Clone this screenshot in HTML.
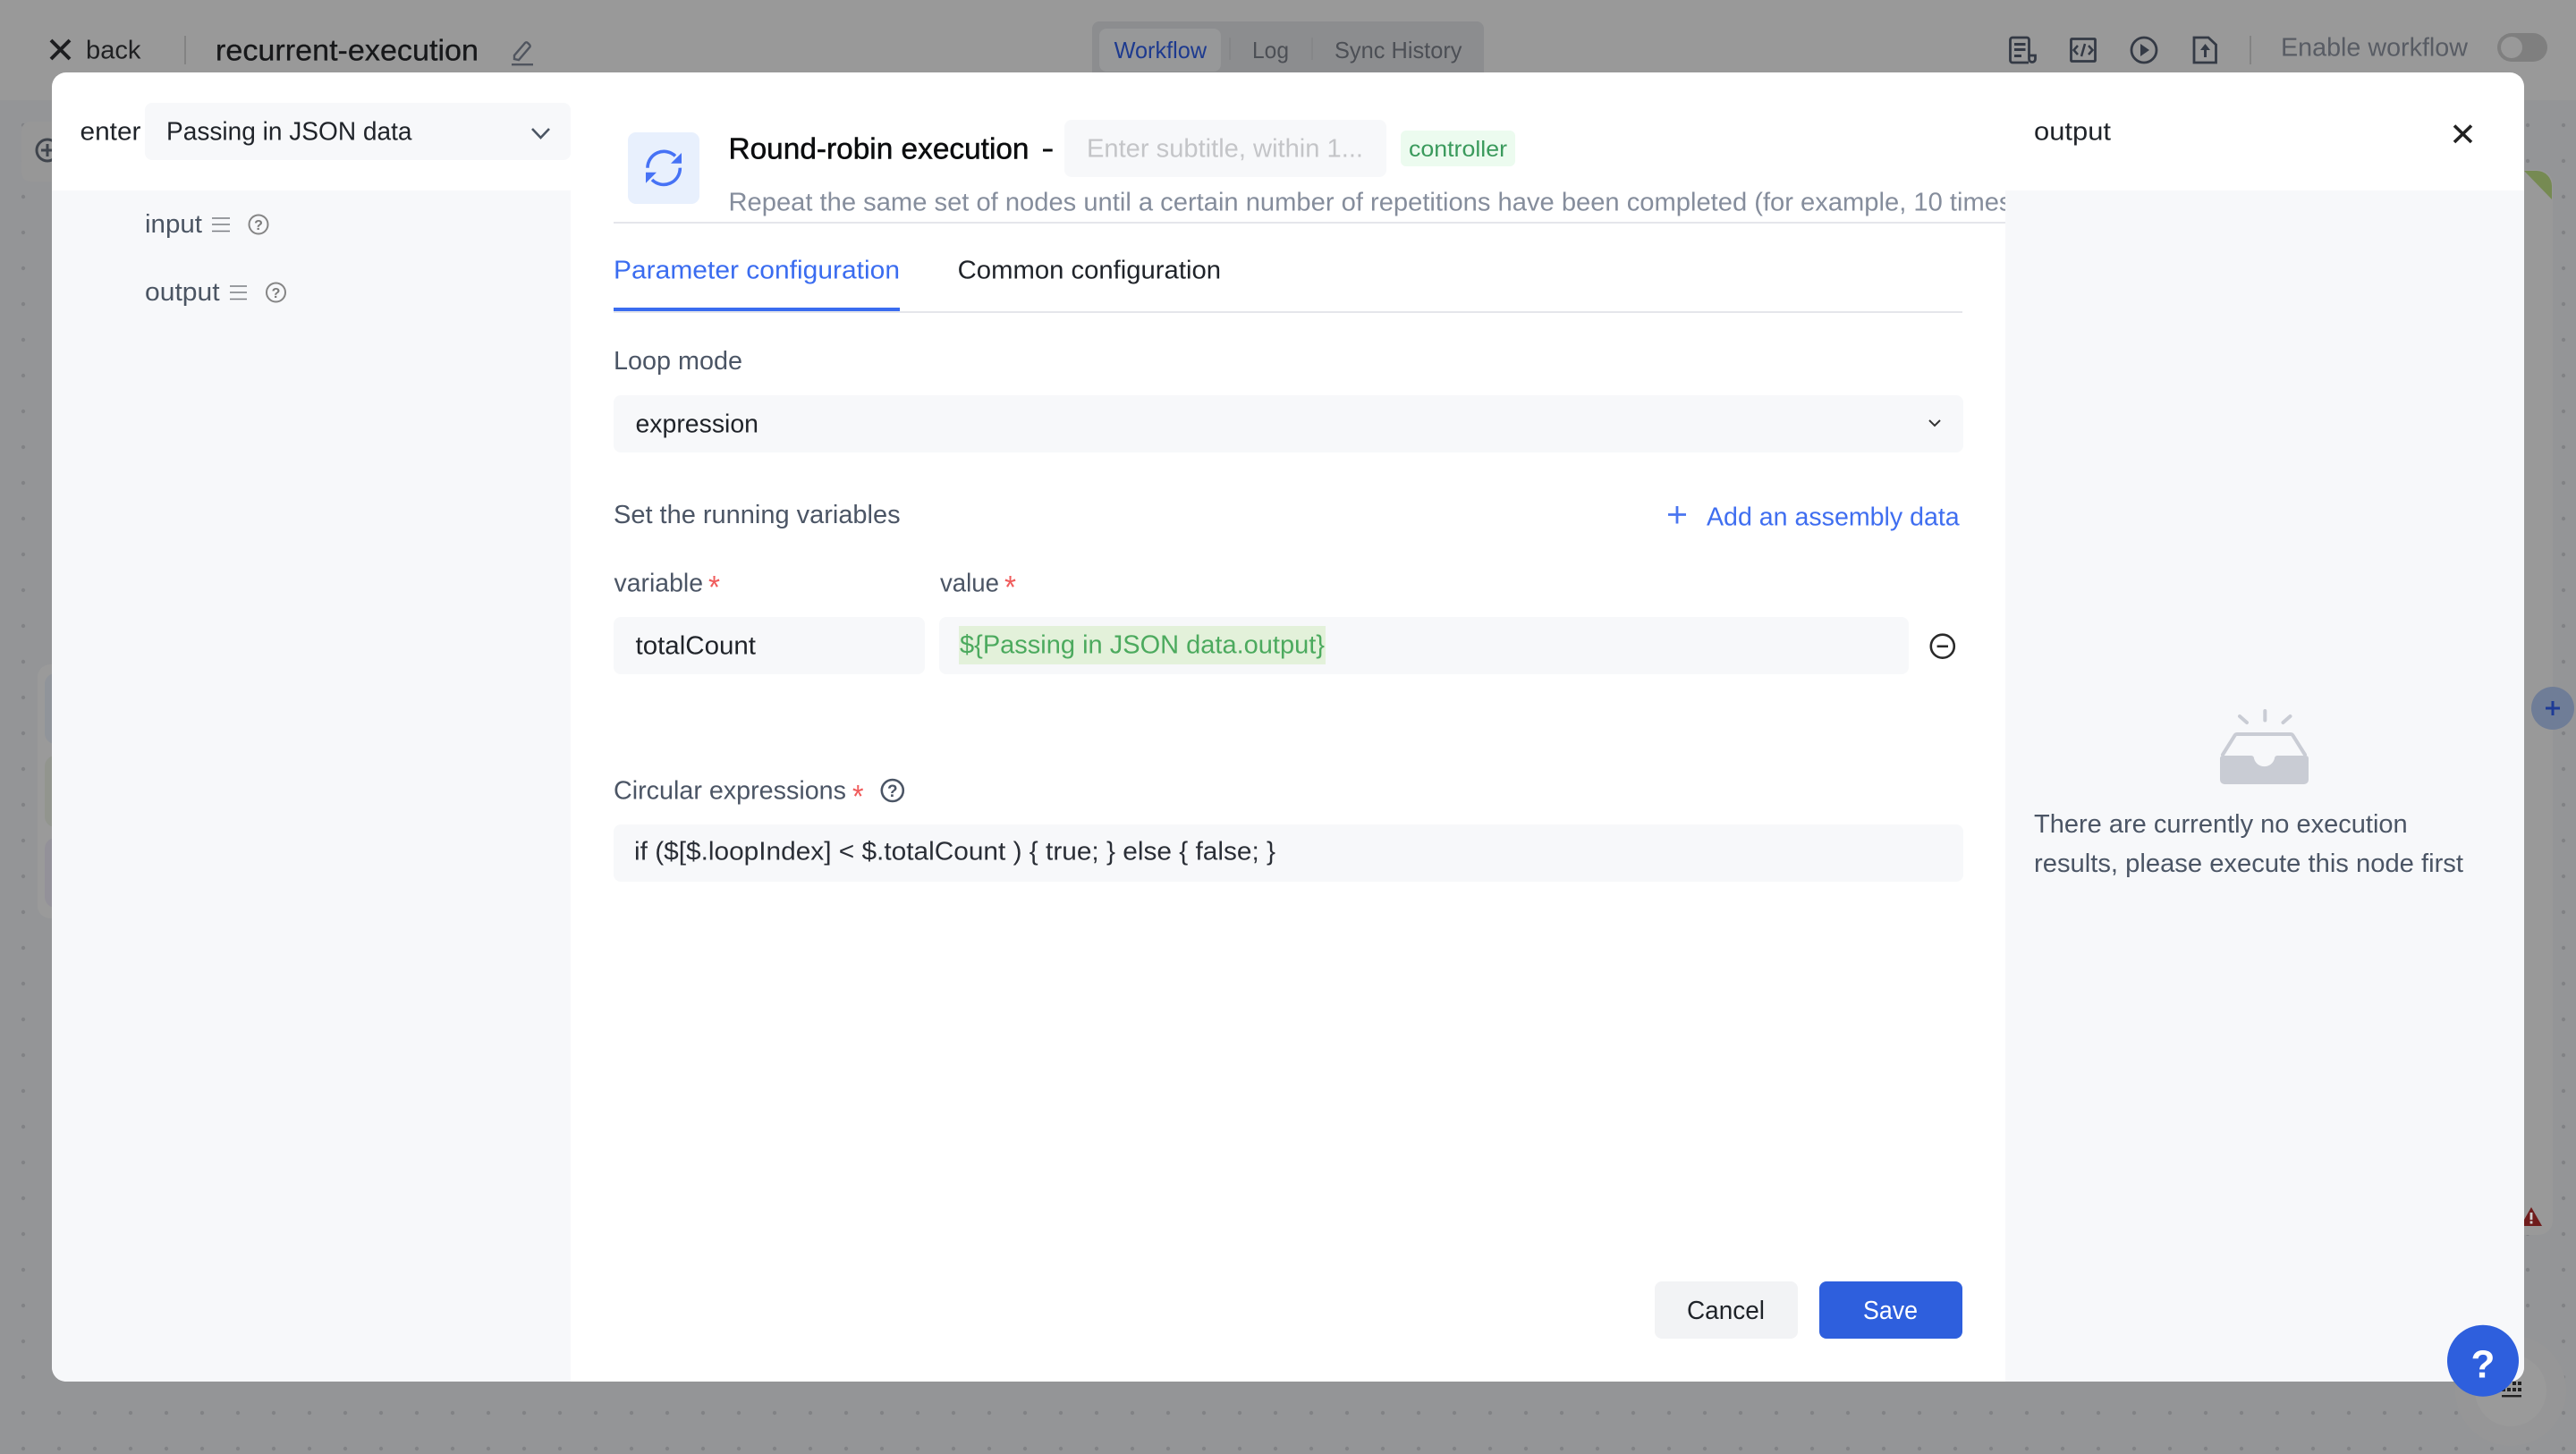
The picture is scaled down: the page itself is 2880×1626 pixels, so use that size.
<!DOCTYPE html>
<html lang="en">
<head>
<meta charset="utf-8">
<title>recurrent-execution</title>
<style>
html,body{margin:0;padding:0;width:2880px;height:1626px;overflow:hidden;background:#949597}
svg{display:block}
text{font-family:"Liberation Sans",Arial,sans-serif;white-space:pre}
</style>
</head>
<body>
<svg xmlns="http://www.w3.org/2000/svg" width="2880" height="1626" viewBox="0 0 2880 1626">
<defs>
<pattern id="dots" patternUnits="userSpaceOnUse" x="0" y="0" width="40" height="40"><circle cx="26" cy="20" r="2.2" fill="#818285"/></pattern>
</defs>

<!-- canvas -->
<rect width="2880" height="1626" fill="#949597"/>
<rect y="120" width="2880" height="1506" fill="url(#dots)"/>
<rect width="2880" height="112" fill="#999999"/>

<!-- background nodes -->
<rect x="24" y="136" width="60" height="67" rx="10" fill="#979797"/>
<circle cx="53" cy="168" r="12" fill="none" stroke="#3f444c" stroke-width="3"/>
<path d="M53 161v14M46 168h14" stroke="#3f444c" stroke-width="3"/>
<rect x="42" y="743" width="40" height="284" rx="14" fill="#9a9a9a"/>
<rect x="50" y="753" width="30" height="79" rx="12" fill="#90949a"/>
<rect x="50" y="845" width="30" height="80" rx="12" fill="#92958e"/>
<rect x="50" y="937" width="30" height="78" rx="12" fill="#939199"/>
<rect x="2780" y="190" width="74" height="1191" rx="16" fill="#999999"/>
<path d="M2822 191h14a17 17 0 0 1 17 17v15z" fill="#768a52"/>
<circle cx="2854" cy="792" r="24" fill="#6f7d97"/>
<path d="M2846 792h16M2854 784v16" stroke="#1e3b96" stroke-width="3"/>
<path d="M2830 1350l12 21h-24z" fill="#6f1c1c"/>
<rect x="2828.6" y="1356" width="2.8" height="8" fill="#cfcfcf"/><rect x="2828.6" y="1365.5" width="2.8" height="3" fill="#cfcfcf"/>
<circle cx="2807" cy="1555" r="62" fill="#969697"/>
<circle cx="2807" cy="1555" r="40" fill="#9a9a9a"/>
<g fill="#222"><rect x="2797" y="1552" width="4" height="4"/><rect x="2803" y="1552" width="4" height="4"/><rect x="2809" y="1552" width="4" height="4"/><rect x="2815" y="1552" width="4" height="4"/><rect x="2809" y="1545" width="4" height="4"/><rect x="2815" y="1545" width="4" height="4"/><rect x="2797" y="1560" width="22" height="2.4"/></g>

<!-- top bar -->
<path d="M57 45l21 21M78 45L57 66" stroke="#1d1e20" stroke-width="4" fill="none"/>
<text x="96" y="65.7" font-size="29" fill="#1f2022" textLength="61.5" lengthAdjust="spacingAndGlyphs">back</text>
<rect x="206" y="40" width="2" height="32" fill="#838383"/>
<text x="241" y="67.7" font-size="33.5" fill="#17181a" textLength="294" lengthAdjust="spacingAndGlyphs" stroke="#17181a" stroke-width=".3">recurrent-execution</text>
<path d="M575 66v-4l12-14a2 2 0 0 1 3 0l2 2a2 2 0 0 1 0 3L580 67z" fill="none" stroke="#50555f" stroke-width="2.400"/>
<rect x="572" y="71" width="24" height="2.400" fill="#50555f"/>

<rect x="1221" y="24" width="438" height="70" rx="8" fill="#8c8d8f"/>
<rect x="1229" y="32" width="136" height="48" rx="8" fill="#979899"/>
<text x="1245.6" y="65" font-size="26" fill="#1d3a8f" textLength="103.5" lengthAdjust="spacingAndGlyphs">Workflow</text>
<rect x="1374" y="42" width="2" height="25" fill="#858688"/>
<text x="1400" y="65" font-size="26" fill="#4c4f55" textLength="41" lengthAdjust="spacingAndGlyphs">Log</text>
<rect x="1466" y="42" width="2" height="25" fill="#858688"/>
<text x="1492" y="65" font-size="26" fill="#4c4f55" textLength="142.5" lengthAdjust="spacingAndGlyphs">Sync History</text>

<g fill="none" stroke="#343a45" stroke-width="2.8">
<path d="M2268 70h-18a2.5 2.5 0 0 1-2.500-2.500V44.500a2.500 2.500 0 0 1 2.500-2.500h16a2.500 2.500 0 0 1 2.500 2.500V66a3.500 3.500 0 0 0 7 0v-4h-7"/>
<rect x="2315.500" y="43.500" width="27" height="25" rx="1"/>
<circle cx="2397" cy="56" r="14"/>
<path d="M2453 70V42h16l8.500 8v20z"/>
</g>
<g fill="#343a45">
<rect x="2252" y="48" width="12.500" height="3"/><rect x="2252" y="54" width="12.500" height="3"/><rect x="2252" y="61" width="8" height="3"/>
<path d="M2393 49l10 7-10 7z"/>
<path d="M2465.500 49l5.500 7h-4v8h-3v-8h-4z"/>
</g>
<path d="M2323 51l-4.500 5 4.500 5M2335 51l4.500 5-4.500 5M2331 49l-4 14" fill="none" stroke="#343a45" stroke-width="2.500"/>
<rect x="2515" y="40" width="2" height="32" fill="#838383"/>
<text x="2550" y="62.7" font-size="29" fill="#585c64" textLength="209" lengthAdjust="spacingAndGlyphs">Enable workflow</text>
<rect x="2792" y="37" width="56" height="32" rx="16" fill="#7f7f7f"/>
<circle cx="2808" cy="53" r="12" fill="#999"/>

<!-- modal -->
<rect x="58" y="81" width="2764" height="1464" rx="16" fill="#ffffff"/>
<path d="M58 213H638V1545H74a16 16 0 0 1-16-16z" fill="#f7f8fa"/>

<!-- left -->
<text x="89.500" y="156.700" font-size="29" fill="#1f2329" textLength="68" lengthAdjust="spacingAndGlyphs">enter</text>
<rect x="162" y="115" width="476" height="64" rx="8" fill="#f7f8fa"/>
<text x="186" y="156.700" font-size="29" fill="#1f2329" textLength="274.500" lengthAdjust="spacingAndGlyphs">Passing in JSON data</text>
<path d="M595 144l9.500 10 9.500-10" fill="none" stroke="#4b5563" stroke-width="2.600"/>
<text x="162" y="260" font-size="29" fill="#4b5563" textLength="64" lengthAdjust="spacingAndGlyphs">input</text>
<path d="M237 244h20M237 251h20M237 258.500h20" stroke="#7a7d82" stroke-width="1.600"/>
<circle cx="289" cy="251" r="10.500" fill="none" stroke="#858585" stroke-width="2"/>
<text x="289" y="257" font-size="16" font-weight="bold" fill="#7a7a7a" text-anchor="middle">?</text>
<text x="162" y="336" font-size="29" fill="#4b5563" textLength="83.600" lengthAdjust="spacingAndGlyphs">output</text>
<path d="M257 320h19M257 327h19M257 334.500h19" stroke="#7a7d82" stroke-width="1.600"/>
<circle cx="308.500" cy="327" r="10.500" fill="none" stroke="#858585" stroke-width="2"/>
<text x="308.500" y="333" font-size="16" font-weight="bold" fill="#7a7a7a" text-anchor="middle">?</text>

<!-- header -->
<rect x="702" y="148" width="80" height="80" rx="9" fill="#e8f0fd"/>
<g fill="none" stroke="#4672f5" stroke-width="3.600">
<path d="M724 187.700A18.300 18.300 0 0 1 755 174.500"/>
<path d="M760.300 187.700A18.300 18.300 0 0 1 729 201"/>
</g>
<path d="M762 171v11.700h-12zM722 192.700h12l-12 12z" fill="#4672f5"/>
<text x="814.500" y="177.700" font-size="33" fill="#0b0c0e" stroke="#0b0c0e" stroke-width=".5" textLength="336" lengthAdjust="spacingAndGlyphs">Round-robin execution</text>
<rect x="1166" y="166.500" width="10.700" height="3" fill="#0b0c0e"/>
<rect x="1190" y="134" width="360" height="64" rx="8" fill="#f7f8fa"/>
<text x="1215" y="175.300" font-size="29" fill="#c4c5c8" textLength="309" lengthAdjust="spacingAndGlyphs">Enter subtitle, within 1...</text>
<rect x="1566" y="146" width="128" height="40" rx="6" fill="#ecfbef"/>
<text x="1575" y="175" font-size="25" fill="#3a9a5c" textLength="110" lengthAdjust="spacingAndGlyphs">controller</text>
<text x="814.500" y="235.700" font-size="29" fill="#858d9c" textLength="1435" lengthAdjust="spacingAndGlyphs">Repeat the same set of nodes until a certain number of repetitions have been completed (for example, 10 times</text>
<rect x="686" y="248" width="1557" height="2" fill="#e5e6eb"/>

<!-- tabs -->
<text x="686" y="311.700" font-size="29" fill="#3a6cf0" textLength="320" lengthAdjust="spacingAndGlyphs">Parameter configuration</text>
<text x="1070.700" y="311.700" font-size="29" fill="#1f2329" textLength="294.300" lengthAdjust="spacingAndGlyphs">Common configuration</text>
<rect x="686" y="348" width="1508" height="2" fill="#e5e6eb"/>
<rect x="686" y="344" width="320" height="4" fill="#3a6cf0"/>

<!-- form -->
<text x="686" y="413" font-size="29" fill="#4b5565" textLength="144" lengthAdjust="spacingAndGlyphs">Loop mode</text>
<rect x="686" y="442" width="1509" height="64" rx="8" fill="#f7f8fa"/>
<text x="710.500" y="483.300" font-size="29" fill="#1f2329" textLength="137.500" lengthAdjust="spacingAndGlyphs">expression</text>
<path d="M2157 470l6 6 6-6" fill="none" stroke="#333" stroke-width="2"/>

<text x="686" y="585" font-size="29" fill="#4b5565" textLength="320.600" lengthAdjust="spacingAndGlyphs">Set the running variables</text>
<path d="M1865 575.500h20M1875 566v19.500" stroke="#4a75f0" stroke-width="2.800"/>
<text x="1908" y="587.300" font-size="29" fill="#3f6ef0" textLength="282.700" lengthAdjust="spacingAndGlyphs">Add an assembly data</text>

<text x="686.500" y="661.700" font-size="29" fill="#4b5565" textLength="99.500" lengthAdjust="spacingAndGlyphs">variable</text>
<text x="792" y="669" font-size="36" fill="#f05c5c" textLength="13" lengthAdjust="spacingAndGlyphs">*</text>
<text x="1051" y="661.700" font-size="29" fill="#4b5565" textLength="66" lengthAdjust="spacingAndGlyphs">value</text>
<text x="1123" y="669" font-size="36" fill="#f05c5c" textLength="13" lengthAdjust="spacingAndGlyphs">*</text>

<rect x="686" y="690" width="348" height="64" rx="8" fill="#f7f8fa"/>
<text x="710.500" y="731.500" font-size="29" fill="#1f2329" textLength="134.500" lengthAdjust="spacingAndGlyphs">totalCount</text>
<rect x="1050" y="690" width="1084" height="64" rx="8" fill="#f7f8fa"/>
<rect x="1072" y="700" width="410" height="43" fill="#e3f1da"/>
<text x="1073" y="730.500" font-size="29" fill="#4caa5e" textLength="408" lengthAdjust="spacingAndGlyphs">${Passing in JSON data.output}</text>
<circle cx="2171.800" cy="722.700" r="13" fill="none" stroke="#2a2a2a" stroke-width="2.600"/>
<rect x="2165.600" y="721.500" width="12.400" height="2.600" fill="#2a2a2a"/>

<text x="686" y="893.300" font-size="29" fill="#4b5565" textLength="260" lengthAdjust="spacingAndGlyphs">Circular expressions</text>
<text x="953" y="903" font-size="36" fill="#f05c5c" textLength="12.500" lengthAdjust="spacingAndGlyphs">*</text>
<circle cx="997.800" cy="884" r="12" fill="none" stroke="#4b5565" stroke-width="2.600"/>
<text x="997.800" y="891" font-size="19" font-weight="bold" fill="#4b5565" text-anchor="middle">?</text>
<rect x="686" y="922" width="1509" height="64" rx="8" fill="#f7f8fa"/>
<text x="709" y="961.700" font-size="29" fill="#2a2e36" textLength="717" lengthAdjust="spacingAndGlyphs">if ($[$.loopIndex] &lt; $.totalCount ) { true; } else { false; }</text>

<!-- buttons -->
<rect x="1850" y="1433" width="160" height="64" rx="8" fill="#f2f3f5"/>
<text x="1886" y="1475" font-size="29" fill="#1f2329" textLength="87" lengthAdjust="spacingAndGlyphs">Cancel</text>
<rect x="2034" y="1433" width="160" height="64" rx="8" fill="#2e5fdd"/>
<text x="2083" y="1475" font-size="29" fill="#ffffff" textLength="61" lengthAdjust="spacingAndGlyphs">Save</text>

<!-- right panel -->
<path d="M2242 213H2822V1529a16 16 0 0 1-16 16H2242z" fill="#f7f8fa"/>
<text x="2274" y="156.700" font-size="29" fill="#1f2329" textLength="86" lengthAdjust="spacingAndGlyphs">output</text>
<path d="M2744 140.500l19 18.500M2763 140.500l-19 18.500" stroke="#222" stroke-width="3.600" fill="none"/>

<g fill="none" stroke="#c9ccd4" stroke-width="4" stroke-linecap="round">
<path d="M2532.300 795v10.500M2504 801l8 7M2560.500 801l-8 7"/>
<path d="M2485 844l13.500-21.500a3 3 0 0 1 2.500-1.500h60a3 3 0 0 1 2.500 1.500L2577 844"/>
</g>
<path d="M2482 848a3 3 0 0 1 3-3h32a3 3 0 0 1 3 3a11.800 11.800 0 0 0 23 0a3 3 0 0 1 3-3h32a3 3 0 0 1 3 3v24a5 5 0 0 1-5 5h-89a5 5 0 0 1-5-5z" fill="#c9ccd4"/>
<text x="2274" y="931" font-size="29" fill="#4b5565" textLength="417.700" lengthAdjust="spacingAndGlyphs">There are currently no execution</text>
<text x="2274" y="975" font-size="29" fill="#4b5565" textLength="480" lengthAdjust="spacingAndGlyphs">results, please execute this node first</text>

<!-- help -->
<circle cx="2776" cy="1521.700" r="40" fill="#2e5fdd"/>
<text x="2776" y="1540.700" font-size="44" font-weight="bold" fill="#ffffff" text-anchor="middle">?</text>
</svg>
</body>
</html>
